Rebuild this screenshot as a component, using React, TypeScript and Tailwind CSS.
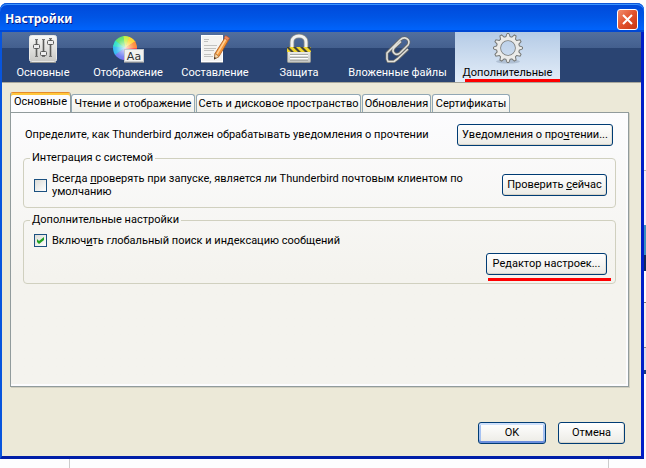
import type { ReactNode } from 'react';
import clsx from 'clsx';

const SlidersIcon = () => (
  <svg width="32" height="32" viewBox="0 0 32 32" aria-hidden="true">
    <defs>
      <linearGradient id="plate" x1="0" y1="0" x2="0" y2="1">
        <stop offset="0" stopColor="#fafaf8" />
        <stop offset="1" stopColor="#c9c9c6" />
      </linearGradient>
    </defs>
    <rect x="2.5" y="3.5" width="27" height="26" rx="2" fill="url(#plate)" stroke="#e9e9e6" />
    <path d="M3 30.5h26" stroke="#8f918f" />
    <path d="M9.5 7v17M16.5 7v17M23.5 7v17" stroke="#5c5d5b" strokeWidth="1.6" />
    <path d="M8 7.500h3M15 7.500h3M22 6.500h3M8 24.500h3M15 24.500h3M22 24.500h3" stroke="#777" />
    <rect x="6.500" y="12.500" width="6" height="4" rx="1" fill="#eee" stroke="#5a5b5a" />
    <rect x="13.500" y="19.500" width="6" height="4" rx="1" fill="#eee" stroke="#5a5b5a" />
    <rect x="20.500" y="8.500" width="6" height="4" rx="1" fill="#eee" stroke="#5a5b5a" />
  </svg>
);

const DisplayIcon = () => (
  <svg width="32" height="32" viewBox="0 0 32 32" aria-hidden="true">
    <defs>
      <clipPath id="disc">
        <circle cx="13" cy="16" r="12" />
      </clipPath>
      <radialGradient id="glow">
        <stop offset="0" stopColor="#fff" stopOpacity=".8" />
        <stop offset=".75" stopColor="#fff" stopOpacity=".1" />
        <stop offset="1" stopColor="#fff" stopOpacity="0" />
      </radialGradient>
    </defs>
    <g clipPath="url(#disc)">
      <path d="M13 16L10 0H20Z" fill="#c9ef3c" />
      <path d="M13 16L19 0H28V7Z" fill="#ffd52c" />
      <path d="M13 16L28 6V16Z" fill="#ff8a35" />
      <path d="M13 16H28V22Z" fill="#fb4646" />
      <path d="M13 16L28 21V30H20Z" fill="#f04ca8" />
      <path d="M13 16L21 30H10Z" fill="#b35cf0" />
      <path d="M13 16L11 30H0V24Z" fill="#6d7bf2" />
      <path d="M13 16L0 25V13Z" fill="#32b9f3" />
      <path d="M13 16L0 14V5Z" fill="#2fe0c6" />
      <path d="M13 16L0 6V0H11Z" fill="#5fe36a" />
    </g>
    <circle cx="13" cy="16" r="12" fill="url(#glow)" />
    <rect x="12.500" y="17.500" width="19" height="12" fill="#f2f2ef" stroke="#c5c8ca" />
    <path d="M12 30.500h20" stroke="#818790" />
    <text
      x="22"
      y="28"
      textAnchor="middle"
      fontSize="11"
      fill="#333"
      fontFamily="'DejaVu Sans', sans-serif"
    >
      Aa
    </text>
  </svg>
);

const ComposeIcon = () => (
  <svg width="32" height="32" viewBox="0 0 32 32" aria-hidden="true">
    <rect x="2.500" y="3.500" width="21" height="26" fill="#f3f3f1" stroke="#fff" />
    <path d="M2 30.500h22" stroke="#9097a3" />
    <path
      d="M5 7.500h5M5 9.500h4M5 13.500h13M5 16.500h12M5 18.500h10M5 22.500h7M5 24.500h9"
      stroke="#c0c1bf"
    />
    <path d="M27 4L30.500 6.500L20 24.500L15.500 27L16 21.500Z" fill="#f4973a" stroke="#a9581a" strokeWidth=".8" />
    <path d="M27.500 6L18 22" stroke="#ffd093" strokeWidth="1.500" />
    <path d="M16 21.500L20 24.500L15.500 27Z" fill="#f4d9ae" stroke="#96602e" strokeWidth=".6" />
    <path d="M15.500 25L17 26L15 27.500Z" fill="#222" />
    <path d="M26.500 3.500L30.500 6L29 8.500L25 6Z" fill="#ef8960" stroke="#b35630" strokeWidth=".6" />
  </svg>
);

const LockIcon = () => (
  <svg width="32" height="32" viewBox="0 0 32 32" aria-hidden="true">
    <defs>
      <linearGradient id="lockBody" x1="0" y1="0" x2="0" y2="1">
        <stop offset="0" stopColor="#f7f7f5" />
        <stop offset="1" stopColor="#c4c6c2" />
      </linearGradient>
      <clipPath id="lockBand">
        <rect x="4" y="15" width="24" height="5" />
      </clipPath>
    </defs>
    <path d="M9 16v-6c0-8 14-8 14 0v6" fill="none" stroke="#8b8e89" strokeWidth="4.600" />
    <path d="M9 16v-6c0-8 14-8 14 0v6" fill="none" stroke="#f2f2ef" strokeWidth="3" />
    <rect x="4.500" y="15.500" width="23" height="15" rx="1" fill="url(#lockBody)" stroke="#969994" />
    <g clipPath="url(#lockBand)">
      <rect x="4" y="15" width="24" height="5" fill="#f0d62b" />
      <path d="M3 15h3l5 5H8zM10 15h3l5 5h-3zM17 15h3l5 5h-3zM24 15h3l5 5h-3z" fill="#44443a" />
    </g>
    <path d="M7 22.500h18M7 25.500h18M7 28.500h18" stroke="#aaaca8" />
    <path d="M7 23.500h18M7 26.500h18" stroke="#fff" />
  </svg>
);

const ClipIcon = () => (
  <svg width="32" height="32" viewBox="0 0 32 32" aria-hidden="true" fill="none" strokeLinejoin="round">
    <path
      d="M26 17L16 26.500L12 29.500H6L5 27V21L18 8C23 3 29 8 26 13L18 21C14 24.500 9 20 12 16L19 9.500"
      stroke="#66696a"
      strokeWidth="3.200"
    />
    <path
      d="M26 17L16 26.500L12 29.500H6L5 27V21L18 8C23 3 29 8 26 13L18 21C14 24.500 9 20 12 16L19 9.500"
      stroke="#e2e2dc"
      strokeWidth="1.600"
    />
  </svg>
);

const GearIcon = () => (
  <svg width="32" height="32" viewBox="0 0 32 32" aria-hidden="true">
    <ellipse cx="16" cy="29.500" rx="12" ry="2" fill="#90a1b7" opacity=".5" />
    <circle cx="16" cy="16" r="9.500" fill="none" stroke="#777977" strokeWidth="5" />
    {[0, 30, 60, 90, 120, 150, 180, 210, 240, 270, 300, 330].map((angle) => (
      <path
        key={angle}
        d="M13.500 6L15 1.500H17L18.500 6"
        transform={`rotate(${angle} 16 16)`}
        fill="#ececea"
        stroke="#777977"
      />
    ))}
    <circle cx="16" cy="16" r="9.400" fill="none" stroke="#ebebe9" strokeWidth="3.200" />
  </svg>
);

const CATEGORIES = [
  { label: 'Основные', icon: <SlidersIcon />, width: 'w-[82px]' },
  { label: 'Отображение', icon: <DisplayIcon />, width: 'w-[88px]' },
  { label: 'Составление', icon: <ComposeIcon />, width: 'w-[86px]' },
  { label: 'Защита', icon: <LockIcon />, width: 'w-[82px]' },
  { label: 'Вложенные файлы', icon: <ClipIcon />, width: 'w-[115px]' },
  { label: 'Дополнительные', icon: <GearIcon />, width: 'w-[105px]', active: true },
];

const TABS = [
  { label: 'Основные', width: 'w-[61px]', active: true },
  { label: 'Чтение и отображение', width: 'w-[124px]' },
  { label: 'Сеть и дисковое пространство', width: 'w-[165px]' },
  { label: 'Обновления', width: 'w-[69px]' },
  { label: 'Сертификаты', width: 'w-[78px]' },
];

type XpButtonProps = {
  children: ReactNode;
  className?: string;
  isDefault?: boolean;
};

const XpButton = ({ children, className, isDefault }: XpButtonProps) => (
  <button
    type="button"
    className={clsx(
      'h-[22px] shrink-0 whitespace-nowrap rounded-[3px] border border-[#003c74] bg-linear-to-b from-white to-[#ecebe5] text-center leading-[20px]',
      isDefault
        ? 'shadow-[inset_0_2px_0_#cee0fb,inset_0_-2px_0_#6d8fdd,inset_2px_0_0_#a6c2f2,inset_-2px_0_0_#a6c2f2]'
        : 'shadow-[inset_0_-1px_0_#d8d4c8,inset_-1px_0_0_#e3e0d7]',
      className,
    )}
  >
    {children}
  </button>
);

type CheckProps = {
  id: string;
  checked?: boolean;
};

const Check = ({ id, checked }: CheckProps) => (
  <span className="grid size-[13px] shrink-0">
    <input
      id={id}
      type="checkbox"
      defaultChecked={checked}
      className="peer col-start-1 row-start-1 size-[13px] appearance-none border border-[#1c5180] bg-linear-to-br from-[#dcdcd7] to-white"
    />
    <svg
      viewBox="0 0 13 13"
      className="pointer-events-none invisible col-start-1 row-start-1 size-[13px] peer-checked:visible"
      aria-hidden="true"
    >
      <path d="M3 5v3l2 2 5-4V3L5 7z" fill="#21a121" />
    </svg>
  </span>
);

const Underline = ({ children }: { children: ReactNode }) => (
  <span className="underline underline-offset-1">{children}</span>
);

const Group = ({ title, className, children }: { title: string; className: string; children: ReactNode }) => (
  <fieldset className={clsx('rounded-[4px] border border-[#d0d0bf] pl-2.5 pr-2', className)}>
    <legend className="-ml-1 px-0.5 leading-[16px]">{title}</legend>
    {children}
  </fieldset>
);

const TitleBar = () => (
  <header className="flex h-[29px] items-center justify-between rounded-t-[7px] bg-linear-to-b from-[#0048d8] via-[#0055e5] to-[#0066ff] pl-[5px] pr-1.5 shadow-[inset_0_1px_0_#0b55d8,inset_0_2px_0_#3a92ff,inset_0_-2px_0_#0048d4]">
    <h1 className="pt-0.5 font-['Noto_Sans','Open_Sans',sans-serif] text-[12px] font-bold leading-[18px] text-white [text-shadow:1px_1px_#0a1883]">
      Настройки
    </h1>
    <button
      type="button"
      aria-label="Закрыть"
      className="mt-1 flex size-[21px] items-center justify-center rounded-[3px] border border-white bg-linear-to-br from-[#f08b6b] via-[#e2512b] to-[#c73510]"
    >
      <svg width="13" height="13" viewBox="0 0 13 13" aria-hidden="true">
        <path d="M2 2l9 9M11 2l-9 9" stroke="#fff" strokeWidth="2" />
      </svg>
    </button>
  </header>
);

const Toolbar = () => (
  <nav className="flex h-[50px] bg-linear-to-b from-[#526f9e] from-0% via-[#435f8e] via-32% to-[#2a4472] to-33% shadow-[0_1px_0_#a8a79c]">
    {CATEGORIES.map(({ label, icon, width, active }) => (
      <button
        key={label}
        type="button"
        className={clsx(
          'relative flex flex-col items-center whitespace-nowrap leading-[16px]',
          width,
          active ? 'bg-linear-to-b from-[#b5cbe6] to-[#e3edf8] text-black' : 'text-white',
        )}
      >
        {icon}
        <span className="mt-px">{label}</span>
        {active && <span className="absolute inset-x-0 bottom-0 ml-2.5 h-[3px] bg-[#fe0000]" />}
      </button>
    ))}
  </nav>
);

const TabStrip = () => (
  <div role="tablist" className="flex h-5 items-end">
    {TABS.map(({ label, width, active }) => (
      <button
        key={label}
        type="button"
        role="tab"
        aria-selected={!!active}
        className={clsx(
          'whitespace-nowrap rounded-t-[3px] border border-b-0 text-center leading-[16px]',
          width,
          active
            ? 'h-5 border-[#919b9c] border-t-[#e68b2c] bg-[#fcfcfe] pb-0.5 shadow-[inset_0_2px_0_#ffc73c]'
            : 'mr-px h-[18px] border-[#91a7b4] bg-linear-to-b from-white to-[#f0f0ea]',
        )}
      >
        {label}
      </button>
    ))}
  </div>
);

export default function App() {
  return (
    <div className="flex min-h-screen flex-col bg-[#fdfdfe] pt-[3px] font-['Roboto','DejaVu_Sans',sans-serif] text-[11px] text-black">
      <div className="flex flex-1">
        <main className="flex flex-1 flex-col rounded-t-[8px] bg-[#0831d9]">
          <TitleBar />
          <div className="flex flex-1 flex-col border-b-[3px] border-l-2 border-r-[3px] border-b-[#001ea8] border-l-[#0855dd] border-r-[#001ec8] bg-[#ece9d8]">
            <Toolbar />
            <div className="flex flex-1 flex-col pb-3 pl-2 pr-3 pt-2.5">
              <TabStrip />
              <section
                role="tabpanel"
                className="flex-1 border border-[#919b9c] bg-linear-to-b from-[#fcfcfe] to-[#f4f3ee] to-60% px-3 pt-[11px] shadow-[1px_1px_0_#d0cebf,inset_-2px_-2px_0_#fcfcfe]"
              >
                <div className="mb-1 flex items-center justify-between pl-0.5 pr-[3px]">
                  <p>Определите, как Thunderbird должен обрабатывать уведомления о прочтении</p>
                  <XpButton className="w-[156px]">
                    Уведомления о про<Underline>ч</Underline>тении...
                  </XpButton>
                </div>

                <Group title="Интеграция с системой" className="mb-1 h-[58px]">
                  <div className="flex items-center justify-between pt-1.5">
                    <div className="flex items-center gap-[5px]">
                      <Check id="default-client" />
                      <label htmlFor="default-client" className="w-[430px] leading-[13px]">
                        Всегда <Underline>п</Underline>роверять при запуске, является ли Thunderbird почтовым
                        клиентом по <br />
                        умолчанию
                      </label>
                    </div>
                    <XpButton className="w-[105px]">
                      Проверить <Underline>с</Underline>ейчас
                    </XpButton>
                  </div>
                </Group>

                <Group title="Дополнительные настройки" className="h-[72px]">
                  <div className="flex items-center gap-[5px] pt-[5px]">
                    <Check id="global-search" checked />
                    <label htmlFor="global-search" className="leading-[15px]">
                      Включ<Underline>и</Underline>ть глобальный поиск и индексацию сообщений
                    </label>
                  </div>
                  <div className="flex justify-end pt-[5px]">
                    <div className="relative">
                      <XpButton className="w-[121px]">
                        Ре<Underline>д</Underline>актор настроек...
                      </XpButton>
                      <span className="absolute -right-1 left-0.5 top-[25px] h-[3px] bg-[#fe0000]" />
                    </div>
                  </div>
                </Group>
              </section>
              <footer className="flex justify-end gap-3 pr-1 pt-[35px]">
                <XpButton className="w-[68px]" isDefault>
                  OK
                </XpButton>
                <XpButton className="w-[67px]">Отмена</XpButton>
              </footer>
            </div>
          </div>
        </main>
        <div className="flex w-0.5 flex-col">
          <div className="h-[168px] border-b border-[#b9b4b0]" />
          <div className="h-[54px] bg-[#f1effa]" />
          <div className="h-[30px] bg-[#3a8fc0]" />
          <div className="h-4 bg-[#10285c]" />
          <div className="h-8 border-b border-[#77777c]" />
          <div className="h-[45px] border-b border-[#8d8080] bg-[#f4efee]" />
          <div className="h-[22px] bg-[#dcdcec]" />
          <div className="h-1 bg-[#1d3e7e]" />
        </div>
      </div>
      <div className="flex h-[9px] justify-between pl-[69px] pr-[37px]">
        <span className="w-px bg-[#ccc]" />
        <span className="w-px bg-[#ccc]" />
      </div>
    </div>
  );
}
